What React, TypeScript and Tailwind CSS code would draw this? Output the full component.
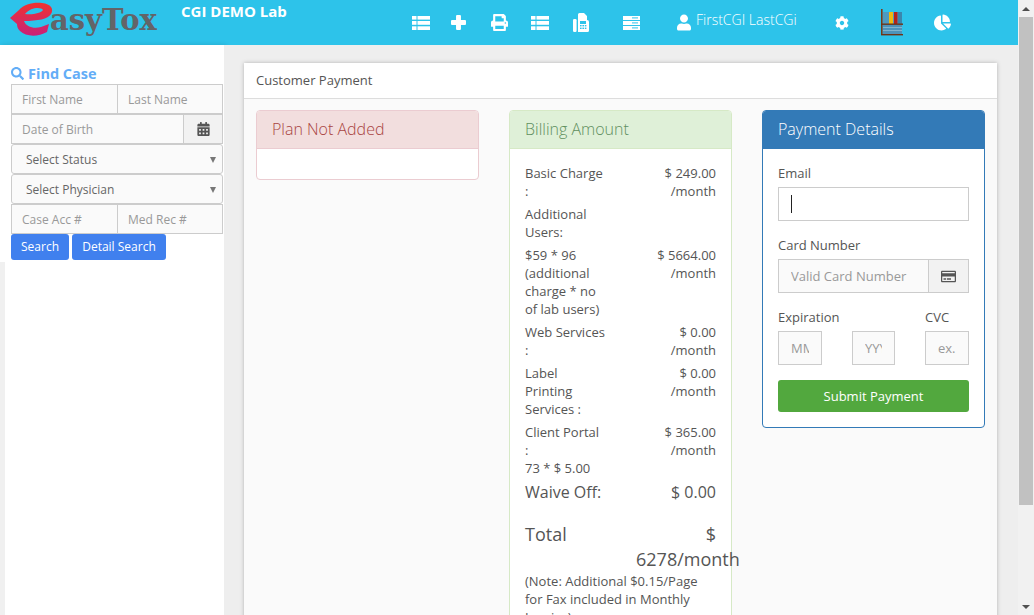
import { FaPrint, FaUser, FaCog, FaChartPie, FaSearch, FaCalendarAlt, FaRegCreditCard } from "react-icons/fa";

const font = { fontFamily: '"Open Sans", sans-serif' };

function ThList({ cls }: { cls: string }) {
  return (
    <svg viewBox="0 0 18 14" className={cls} fill="white">
      <rect x="0" y="0" width="4.5" height="3.6" />
      <rect x="5.5" y="0" width="12.5" height="3.6" />
      <rect x="0" y="5" width="4.5" height="3.8" />
      <rect x="5.5" y="5" width="12.5" height="3.8" />
      <rect x="0" y="10.3" width="4.5" height="3.7" />
      <rect x="5.5" y="10.3" width="12.5" height="3.7" />
    </svg>
  );
}

function PlusIcon() {
  return (
    <svg viewBox="0 0 14 14" className="ml-[21px] w-[15px] h-[15px] shrink-0" fill="white">
      <rect x="4.7" y="0" width="4.6" height="14" rx="1" />
      <rect x="0" y="4.7" width="14" height="4.6" rx="1" />
    </svg>
  );
}

function FaxIcon() {
  return (
    <svg viewBox="0 0 16 20" className="ml-[24px] w-[16px] h-[20px] shrink-0">
      <rect x="0" y="6" width="3.6" height="13" rx="1.2" fill="white" />
      <path d="M5 7 V1.5 A1.5 1.5 0 0 1 6.5 0 H11 L14 3 V7 A2 2 0 0 1 16 9 V17.5 A1.5 1.5 0 0 1 14.5 19 H5 Z" fill="white" />
      <rect x="7" y="8" width="6" height="3" fill="#2dc3ea" />
      <rect x="7" y="12" width="1.6" height="1.4" fill="#2dc3ea" />
      <rect x="9.4" y="12" width="1.6" height="1.4" fill="#2dc3ea" />
      <rect x="11.8" y="12" width="1.6" height="1.4" fill="#2dc3ea" />
      <rect x="7" y="14.6" width="1.6" height="1.4" fill="#2dc3ea" />
      <rect x="9.4" y="14.6" width="1.6" height="1.4" fill="#2dc3ea" />
      <rect x="11.8" y="14.6" width="1.6" height="1.4" fill="#2dc3ea" />
    </svg>
  );
}

function ServerIcon() {
  return (
    <svg viewBox="0 0 17 14" className="w-[17px] h-[14px]" fill="white">
      <rect x="0" y="0" width="17" height="4" />
      <rect x="0" y="5" width="17" height="4" />
      <rect x="0" y="10" width="17" height="4" />
      <rect x="9" y="6.4" width="6" height="1" fill="#2dc3ea" />
      <rect x="9" y="1.4" width="6" height="1" fill="#2dc3ea" />
      <rect x="9" y="11.4" width="6" height="1" fill="#2dc3ea" />
    </svg>
  );
}

function Shelf() {
  return (
    <svg viewBox="0 0 26 28" className="w-[26px] h-[28px]">
      <rect x="5" y="3" width="19" height="12" fill="#4e9ac0" />
      <rect x="11" y="3" width="4" height="12" fill="#efb810" />
      <rect x="16" y="3" width="3.5" height="12" fill="#b5221c" />
      <rect x="20" y="3" width="4" height="12" fill="#3a86ad" />
      <rect x="5" y="16" width="19" height="9" fill="#4d93ba" />
      <rect x="5" y="18" width="19" height="1" fill="#7fb4cf" />
      <rect x="5" y="21" width="19" height="1" fill="#7fb4cf" />
      <rect x="3" y="0" width="1.6" height="26" fill="#7a3a1a" />
      <rect x="3" y="14.5" width="22" height="1.4" fill="#6e3418" />
      <rect x="3" y="25" width="22" height="1.4" fill="#6e3418" />
    </svg>
  );
}

function Logo() {
  return (
    <div className="w-[181px] h-[45px] flex items-start shrink-0 pl-[10px]">
      <svg viewBox="0 0 44 36" className="w-[44px] h-[36px] mt-[1px] shrink-0">
        <defs>
          <linearGradient id="eg" x1="0" y1="0" x2="0" y2="1">
            <stop offset="0" stopColor="#f0322f" />
            <stop offset="0.55" stopColor="#d92a5a" />
            <stop offset="1" stopColor="#c81f78" />
          </linearGradient>
        </defs>
        <path
          d="M0 17 L9 9 C14 3 24 1 32 2 C41 3 44 8 41 13 C38 18 28 20 14 20 C16 26 24 28 31 26 L39 23 L37 31 C28 36 16 36 10 30 C8 28 7 26 7 23 Z M15 13 C23 14 31 12 33 9 C31 6 21 6 15 13 Z"
          fill="url(#eg)"
          fillRule="evenodd"
        />
      </svg>
      <span
        className="text-[29px] font-bold leading-[36px] mt-[2px] -ml-[4px] text-[#636468]"
        style={{ fontFamily: '"DejaVu Serif", serif' }}
      >
        asyTox
      </span>
    </div>
  );
}

function Header() {
  return (
    <header className="h-[45px] bg-[#2dc3ea] flex shrink-0 text-white">
      <Logo />
      <div className="w-[231px] shrink-0 text-[15px] font-bold leading-[23px]">CGI DEMO Lab</div>
      <nav className="flex items-center h-[45px]">
        <ThList cls="w-[18px] h-[14px] shrink-0" />
        <PlusIcon />
        <FaPrint className="ml-[25px] w-[17px] h-[17px]" />
        <ThList cls="ml-[23px] w-[18px] h-[14px] shrink-0" />
        <FaxIcon />
        <div className="ml-[34px]"><ServerIcon /></div>
        <FaUser className="ml-[37px] w-[14px] h-[17px]" />
        <span className="ml-[5px] w-[101px] text-[14px] font-light leading-[18px] -mt-[6px] whitespace-nowrap">FirstCGI LastCGi</span>
        <FaCog className="ml-[38px] w-[14px] h-[14px]" />
        <div className="ml-[29px]"><Shelf /></div>
        <FaChartPie className="ml-[30px] w-[17px] h-[17px]" />
      </nav>
    </header>
  );
}

const sideInput =
  "h-[30px] min-w-0 bg-[#fafafa] border border-[#ccc] text-[12px] px-[10px] outline-none placeholder:text-[#999] text-[#555]";

function Select({ label }: { label: string }) {
  return (
    <div className="h-[30px] flex items-center justify-between bg-[#fafafa] border border-[#ccc] rounded-[3px] pl-[14px] pr-[6px] pt-[2px] text-[12px] text-[#666]">
      <span>{label}</span>
      <span className="w-0 h-0 border-l-[3px] border-r-[3px] border-t-[6px] border-l-transparent border-r-transparent border-t-[#777]" />
    </div>
  );
}

function Sidebar() {
  return (
    <aside className="w-[224px] shrink-0 bg-white flex flex-col shadow-[2px_0_5px_rgba(0,0,0,0.14)]">
      <div className="pl-[11px] pr-[1px] pt-[20px] h-[217px] shrink-0">
        <div className="h-[19px] flex items-center gap-[4px] text-[14.5px] font-bold text-[#63adf7] leading-[19px] -mt-[1px] mb-[1px]">
          <FaSearch className="w-[13px] h-[13px]" />
          <span>Find Case</span>
        </div>
        <div className="grid grid-cols-[107px_1fr]">
          <input className={sideInput} placeholder="First Name" />
          <input className={sideInput + " border-l-0"} placeholder="Last Name" />
        </div>
        <div className="flex">
          <input className={sideInput + " flex-1"} placeholder="Date of Birth" />
          <div className="w-[39px] h-[30px] flex items-center justify-center bg-[#f2f2f2] border border-l-0 border-[#ccc]">
            <FaCalendarAlt className="w-[13px] h-[14px] text-[#555]" />
          </div>
        </div>
        <Select label="Select Status" />
        <Select label="Select Physician" />
        <div className="grid grid-cols-[107px_1fr]">
          <input className={sideInput} placeholder="Case Acc #" />
          <input className={sideInput + " border-l-0"} placeholder="Med Rec #" />
        </div>
        <div className="flex gap-[3px]">
          <button className="h-[26px] w-[58px] bg-[#4080ee] text-white text-[12px] rounded-[3px]">Search</button>
          <button className="h-[26px] w-[94px] bg-[#4080ee] text-white text-[12px] rounded-[3px]">Detail Search</button>
        </div>
      </div>
      <div className="flex-1 border-l-[5px] border-[#f0f0f0]" />
    </aside>
  );
}

function Row({ left, right, spacing }: { left: React.ReactNode; right: React.ReactNode; spacing?: string }) {
  return (
    <div className={"flex " + (spacing ?? "mb-[5px]")}>
      <div className="w-[111px] pr-[30px] shrink-0">{left}</div>
      <div className="w-[80px] text-right">{right}</div>
    </div>
  );
}

function Billing() {
  return (
    <section className="h-[600px] bg-white border border-[#d6e9c6] rounded-t-[4px]">
      <h3 className="h-[38px] bg-[#dff0d8] border-b border-[#d6e9c6] rounded-t-[3px] px-[15px] text-[16px] font-light leading-[37px] text-[#5f8f5f]">
        Billing Amount
      </h3>
      <div className="px-[15px] pt-[15px] text-[13px] leading-[18px] text-[#555]">
        <Row left="Basic Charge :" right="$ 249.00 /month" />
        <Row left="Additional Users:" right="" />
        <Row left="$59 * 96 (additional charge * no of lab users)" right="$ 5664.00 /month" />
        <Row left="Web Services :" right="$ 0.00 /month" />
        <Row left="Label Printing Services :" right="$ 0.00 /month" />
        <Row
          left={<>Client Portal<br />:<br />73 * $ 5.00</>}
          right="$ 365.00 /month"
          spacing="mb-[3px]"
        />
        <div className="flex justify-between text-[16px] leading-[24px] mb-[18px]">
          <span>Waive Off:</span>
          <span>$ 0.00</span>
        </div>
        <div className="flex text-[18px] leading-[25px]">
          <div className="w-[111px] shrink-0">Total</div>
          <div className="w-[80px] text-right">$ 6278/month</div>
        </div>
        <p className="pr-[5px]">(Note: Additional $0.15/Page for Fax included in Monthly Invoice)</p>
      </div>
    </section>
  );
}

const payInput =
  "h-[34px] min-w-0 bg-[#fafafa] border border-[#ccc] text-[13px] px-[12px] outline-none placeholder:text-[#999]";

function Payment() {
  return (
    <section className="h-[318px] bg-white border border-[#337ab7] rounded-[4px] overflow-hidden text-[13px] text-[#555] leading-[18px]">
      <h3 className="h-[38px] bg-[#337ab7] px-[15px] text-[16px] font-light leading-[37px] text-white">Payment Details</h3>
      <div className="px-[15px] pt-[15px]">
        <label className="block h-[23px]">Email</label>
        <div className="h-[34px] bg-white border border-[#ccc] flex items-center pl-[12px]">
          <span className="w-px h-[18px] bg-[#222]" />
        </div>
        <label className="block h-[23px] mt-[15px]">Card Number</label>
        <div className="flex">
          <input className={payInput + " flex-1"} placeholder="Valid Card Number" />
          <div className="w-[40px] h-[34px] flex items-center justify-center bg-[#f2f2f2] border border-l-0 border-[#ccc]">
            <FaRegCreditCard className="w-[15px] h-[15px] text-[#555]" />
          </div>
        </div>
        <div className="flex justify-between mt-[15px] h-[23px]">
          <label>Expiration</label>
          <label className="w-[44px] text-left">CVC</label>
        </div>
        <div className="flex justify-between">
          <input className={payInput + " w-[44px]"} placeholder="MM" />
          <input className={payInput + " w-[43px]"} placeholder="YYYY" />
          <input className={payInput + " w-[44px]"} placeholder="ex. 311" />
        </div>
        <button className="mt-[15px] w-full h-[32px] bg-[#52a83e] text-white rounded-[3px] text-[13px] font-medium">
          Submit Payment
        </button>
      </div>
    </section>
  );
}

function Main() {
  return (
    <main className="flex-1 min-w-0 bg-[#eeeeee] pl-[20px] pr-[21px] pt-[18px] overflow-hidden">
      <div className="bg-[#fafafa] h-[640px] shadow-[0_0_4px_rgba(0,0,0,0.25)]">
        <div className="h-[36px] bg-white border-b border-[#ddd] pl-[12px] text-[13px] leading-[35px] text-[#555]">
          Customer Payment
        </div>
        <div className="grid grid-cols-[223px_223px_223px] gap-x-[30px] pl-[12px] pt-[11px] items-start">
          <section className="h-[70px] bg-white border border-[#ebccd1] rounded-[4px] overflow-hidden">
            <h3 className="h-[38px] bg-[#f2dede] border-b border-[#ebccd1] px-[15px] text-[16px] font-light leading-[37px] text-[#a94442]">
              Plan Not Added
            </h3>
          </section>
          <Billing />
          <Payment />
        </div>
      </div>
    </main>
  );
}

function Scrollbar() {
  return (
    <div className="w-[16px] shrink-0 bg-[#f1f1f1] flex flex-col">
      <div className="h-[17px] flex items-center justify-center">
        <span className="w-0 h-0 border-l-[4px] border-r-[4px] border-b-[4px] border-l-transparent border-r-transparent border-b-[#505050]" />
      </div>
      <div className="h-[488px] mx-px bg-[#c1c1c1]" />
      <div className="flex-1" />
      <div className="h-[17px] flex items-center justify-center">
        <span className="w-0 h-0 border-l-[4px] border-r-[4px] border-t-[4px] border-l-transparent border-r-transparent border-t-[#505050]" />
      </div>
    </div>
  );
}

export default function App() {
  return (
    <div className="h-[615px] w-[1034px] overflow-hidden flex" style={font}>
      <div className="flex-1 min-w-0 flex flex-col">
        <Header />
        <div className="flex-1 min-h-0 flex">
          <Sidebar />
          <Main />
        </div>
      </div>
      <Scrollbar />
    </div>
  );
}
